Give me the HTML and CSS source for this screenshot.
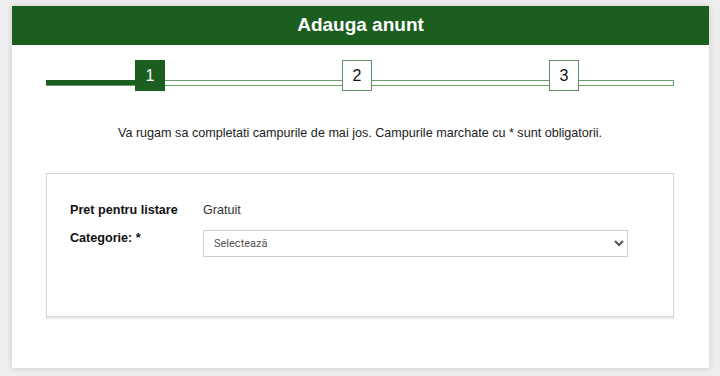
FILE: index.html
```html
<!DOCTYPE html>
<html lang="ro">
<head>
  <meta charset="UTF-8">
  <meta name="viewport" content="width=device-width, initial-scale=1.0">
  <title>Adauga anunt</title>
  <link rel="stylesheet" href="styles.css">
</head>
<body>
  <div class="card">
    <header>
      <h1>Adauga anunt</h1>
    </header>

    <div class="steps">
      <div class="step active">1</div>
      <div class="step">2</div>
      <div class="step">3</div>
    </div>

    <p class="intro">Va rugam sa completati campurile de mai jos. Campurile marchate cu * sunt obligatorii.</p>

    <div class="form-box">
      <div class="label">Pret pentru listare</div>
      <div class="value">Gratuit</div>
      <label class="label" for="categorie">Categorie: *</label>
      <select id="categorie">
        <option>Selectează</option>
      </select>
    </div>
  </div>
</body>
</html>
```

FILE: styles.css
```css
html, body { margin: 0; }
body {
  background: #eeeeee;
  font-family: 'Liberation Sans', Arial, sans-serif;
  color: #222;
  padding: 6px 11px 8px 12px;
}
.card {
  background: #fff;
  box-shadow: 0 0 6px rgba(0,0,0,0.15);
  padding: 0 35px 51px 34px;
}
header {
  background: #1b5e20;
  margin: 0 -35px 0 -34px;
  height: 39px;
}
header h1 {
  margin: 0;
  color: #fff;
  font-size: 19px;
  line-height: 38px;
  text-align: center;
}
.steps {
  position: relative;
  display: flex;
  gap: 177px;
  padding-left: 89px;
  margin-top: 15px;
  height: 31px;
}
.steps::before {
  content: "";
  position: absolute;
  left: 0;
  right: 0;
  top: 20px;
  height: 4px;
  border: 1px solid #6a9c6d;
  background: #fff;
}
.steps::after {
  content: "";
  position: absolute;
  left: 0;
  width: 89px;
  top: 20px;
  height: 5px;
  background: #1b5e20;
}
.step {
  position: relative;
  z-index: 1;
  width: 28px;
  height: 29px;
  border: 1px solid #5f8f62;
  background: #fff;
  font-size: 16px;
  line-height: 29px;
  text-align: center;
  color: #111;
}
.step.active {
  background: #1b5e20;
  border-color: #1b5e20;
  color: #fff;
}
.intro {
  margin: 34px 0 0;
  font-size: 12.6px;
  line-height: 16px;
  text-align: center;
  color: #222;
}
.form-box {
  margin-top: 32px;
  height: 144px;
  box-sizing: border-box;
  border: 1px solid #d4d4d4;
  box-shadow: 0 2px 1px rgba(0,0,0,0.08);
  padding: 28px 23px;
  display: grid;
  grid-template-columns: 133px 425px;
  grid-auto-rows: min-content;
  row-gap: 12px;
  font-size: 12.6px;
  line-height: 16px;
}
.label { font-weight: bold; color: #111; }
.label span { font-weight: normal; }
.value { color: #333; }
select {
  width: 425px;
  height: 27px;
  border: 1px solid #cfcfcf;
  background: #fff;
  font-family: 'Roboto', 'Liberation Sans', sans-serif;
  font-size: 11px;
  color: #555;
  padding: 0 6px;
}
```
